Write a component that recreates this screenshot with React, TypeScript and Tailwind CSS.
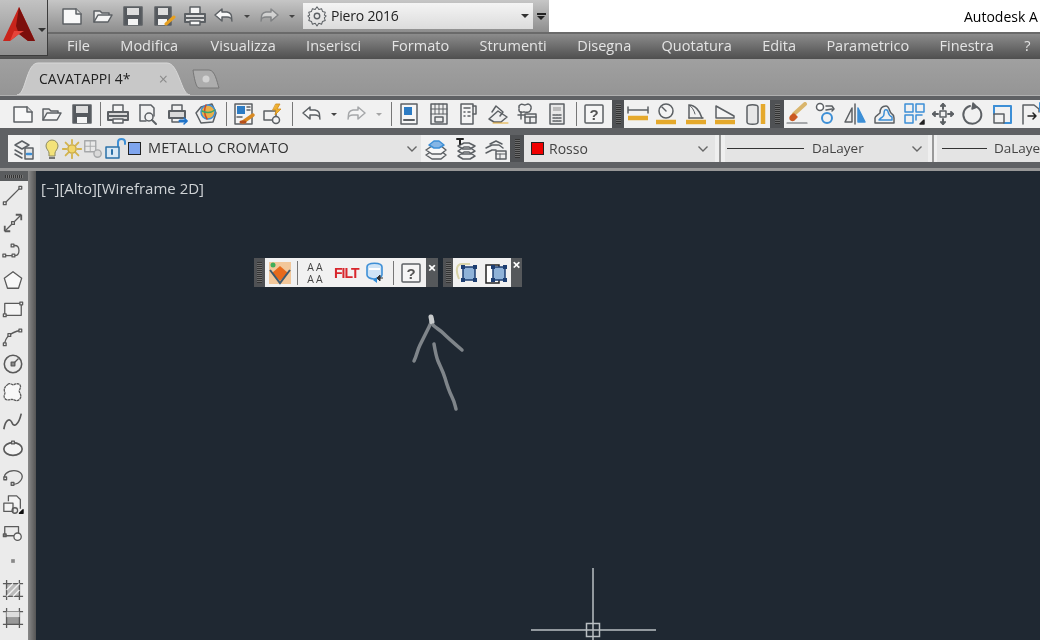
import React from "react";

const G = "#5c6064";
const B = "#3d8fd6";
const Y = "#e5a92c";

function Ic({ s = 24, children }: { s?: number; children: React.ReactNode }) {
  return (
    <svg width={s} height={s} viewBox="0 0 24 24" fill="none" stroke={G} strokeWidth="1.5" strokeLinejoin="round" strokeLinecap="round" className="shrink-0">
      {children}
    </svg>
  );
}

const New = () => <Ic><path d="M3 5h13l5 5v10H3z" fill="#f8f8f8" /><path d="M16 5v5h5" fill="#ddd" /></Ic>;
const Open = () => <Ic><path d="M3 18V7h6l2 2h7v3" fill="#e9e9e9" /><path d="M3 18l4-7h14l-4 7z" fill="#f5f5f5" /></Ic>;
const Save = () => <Ic><path d="M3 3h18v18H3z" fill="#55595e" /><path d="M6 4h12v7H6z" fill="#ddd" stroke="none" /><path d="M7 15h10v6H7z" fill="#f4f4f4" stroke="none" /></Ic>;
const SaveAs = () => <Ic><path d="M3 3h16v18H3z" fill="#55595e" /><path d="M6 4h10v7H6z" fill="#ddd" stroke="none" /><path d="M6 15h9v6H6z" fill="#f4f4f4" stroke="none" /><path d="M14 20l8-7" stroke="#e8a020" strokeWidth="3" /></Ic>;
const Print = () => <Ic><path d="M7 9V3h10v6" fill="#f4f4f4" /><path d="M2 10h20v8H2z" fill="#d9d9d9" strokeWidth="2" /><path d="M2 14h20" strokeWidth="2" /><path d="M7 17h10v4H7z" fill="#f8f8f8" /></Ic>;
const Preview = () => <Ic><path d="M5 3h11l3 3v8" /><path d="M5 3v16h6" /><circle cx="14" cy="15" r="4" /><path d="M17 18l4 4" strokeWidth="2" /></Ic>;
const Plot = () => <Ic><path d="M7 8V3h10v5" /><path d="M4 9h16v7H4z" fill="#d9d9d9" strokeWidth="2" /><path d="M7 16v4h7" /><path d="M15 19h6" stroke="#1f73c8" strokeWidth="3" /><path d="M19 16l3 3-3 3" stroke="#1f73c8" strokeWidth="1.5" /></Ic>;
const Pub3D = () => <Ic><path d="M2 11l5-6 11-3 4 9-3 9-12 1z" fill="#eee" /><circle cx="14" cy="10" r="7" fill="#e8b04a" stroke={B} /><path d="M12 3c-2 4-2 9 1 14" stroke="#cc4a2a" /><path d="M8 9c4 2 9 2 13-1" stroke="#3aa56a" /></Ic>;
const Match = () => <Ic><path d="M3 2h17v20H3z" fill="#f4f4f4" /><path d="M5 4h8v8H5z" fill="#2d7cc4" stroke="none" /><path d="M5 15h5" /><path d="M15 5h3M15 8h3" /><path d="M11 20l10-7" stroke="#d98a22" strokeWidth="3.5" /><path d="M9 20h4" stroke="#b7501c" strokeWidth="3" /></Ic>;
const Block = () => <Ic><path d="M3 9h12v9H3z" /><circle cx="15" cy="18" r="3.5" fill="#f4f4f4" /><path d="M15 2l4 0-3 5h4l-6 6 1-5h-3z" fill="#efb12f" stroke="#d08a1a" strokeWidth="0.8" /></Ic>;
const Undo = () => <Ic><path d="M10 5l-7 6 7 6v-4h5c3 0 5 2 5 4-1-3 1-8-5-9h-5z" fill="#f8f8f8" /></Ic>;
const Redo = () => <Ic><g opacity="0.5"><path d="M14 5l7 6-7 6v-4H9c-3 0-5 2-5 4 1-3-1-8 5-9h5z" fill="#f8f8f8" /></g></Ic>;
const Drop = ({ dim }: { dim?: boolean }) => <span className={`inline-block w-0 h-0 shrink-0 border-x-[3px] border-x-transparent border-t-[3px] ${dim ? "border-t-[#a5a5a5]" : "border-t-[#444]"}`} />;
const Props = () => <Ic><path d="M4 2h16v20H4z" fill="#f6f6f6" /><path d="M7 5h8v8H7z" fill="#2d7cc4" stroke="none" /><path d="M7 18h10" strokeWidth="2" /></Ic>;
const Design = () => <Ic><path d="M4 2h16v20H4z" fill="#eee" /><path d="M12 2v10M4 7h16M4 12h16M8 2v10M16 2v10" strokeWidth="1" /><path d="M8 15h8v5H8z" /></Ic>;
const Tools = () => <Ic><path d="M5 2h12v20H5z" fill="#f4f4f4" /><path d="M8 6h6M8 10h1M12 10h2M8 14h1M12 14h2" strokeWidth="1.5" /><path d="M17 4h3v8h-3" /></Ic>;
const SheetSet = () => <Ic><path d="M3 17l9-8 9 6-6 5H8z" fill="#eee" /><path d="M6 10l4-6 7 6-3 4" /><path d="M7 21h15" stroke={Y} strokeWidth="1" /></Ic>;
const Markup = () => <Ic><path d="M4 4c2-3 5-1 6-1s3-2 5 0 1 4 0 6-5 1-6 1-5 1-5-2 0-3 0-4z" strokeDasharray="2 1" /><path d="M3 13h7M6 10v7" /><path d="M10 12h11v9H10z" fill="#eee" /><path d="M10 15h11M15 15v6" /></Ic>;
const Calc = () => <Ic><path d="M5 2h14v20H5z" fill="#e8e8e8" /><path d="M8 5h8v4H8z" fill="#bbb" stroke="none" /><path d="M8 13h8M8 16h8M8 19h8" strokeWidth="1.5" strokeDasharray="2 1" /></Ic>;
const Help = () => <svg width="22" height="22" viewBox="0 0 22 22" className="shrink-0"><rect x="2" y="2" width="18" height="18" rx="1" fill="#f5f5f5" stroke={G} strokeWidth="1.5" /><text x="11" y="17" textAnchor="middle" fontSize="15" fontWeight="700" fill="#555" fontFamily="Liberation Sans">?</text></svg>;
const Ruler = ({ y = 20 }: { y?: number }) => <path d={`M2 ${y}h20`} stroke={Y} strokeWidth="4.5" strokeLinecap="butt" />;
const DimLin = () => <Ic><path d="M2 8h20M2 5v6M22 5v6" strokeWidth="1.5" /><Ruler y={16} /></Ic>;
const DimRad = () => <Ic><circle cx="12" cy="9" r="7" fill="#f4f4f4" /><path d="M12 9L8 5" /><Ruler /></Ic>;
const DimAng = () => <Ic><path d="M5 16V3c6 0 11 6 13 13" /><path d="M5 3c3 2 5 5 6 9" strokeWidth="1" /><path d="M5 16h14" /><Ruler /></Ic>;
const DimAli = () => <Ic><path d="M3 16V4l18 10v2z" fill="#f4f4f4" /><Ruler /></Ic>;
const DimBase = () => <Ic><path d="M4 5c0-3 11-3 11 0v15c0 3-11 3-11 0z" fill="#e7e7e7" /><path d="M20 2v20" stroke={Y} strokeWidth="4.5" strokeLinecap="butt" /></Ic>;
const Erase = () => <Ic><path d="M20 2L9 12" stroke="#d9b56c" strokeWidth="4" /><path d="M9 12l3 3-3 3c-2 1-4 0-4-2s2-3 4-4z" fill="#cb5a22" stroke="#cb5a22" /><path d="M2 21h20" strokeWidth="1.2" /></Ic>;
const CopyI = () => <Ic><circle cx="7" cy="5" r="3.5" fill="#fff" /><circle cx="14" cy="16" r="5" stroke={B} strokeWidth="2" /><path d="M13 4h6l2 3-2 2M13 8l6-1" strokeWidth="1.5" /></Ic>;
const Mirror = () => <Ic><path d="M12 2v20" /><path d="M9 6v14H2z" fill="#ececec" /><path d="M15 6v14h7z" fill={B} stroke={B} /></Ic>;
const Offset = () => <Ic><path d="M3 21v-5c0-2 3-3 5-5 0-4 2-7 6-7s3 7 6 8c2 1 2 3 2 4v5z" stroke={G} /><path d="M7 18c3-4 5-2 5-6s1-5 3-4 0 5 5 7v3z" stroke={B} /></Ic>;
const Array_ = () => <Ic><path d="M3 2h8v8H3zM14 2h8v8h-8zM3 13h8v8H3z" stroke={B} /><path d="M14 13h6M14 13v5" stroke={B} /><path d="M22 18v4h-4z" fill="#222" stroke="#222" /></Ic>;
const Move = () => <Ic><path d="M9 9h6v6H9z" /><path d="M12 2v5M12 17v5M2 12h5M17 12h5" strokeWidth="2" /><path d="M10 4l2-2 2 2M10 20l2 2 2-2M4 10l-2 2 2 2M20 10l2 2-2 2" strokeWidth="2" /></Ic>;
const Rotate = () => <Ic><path d="M9 4a9 9 0 1 0 7 1" strokeWidth="2" /><path d="M12 1l4 4-5 2z" fill={G} /></Ic>;
const Scale = () => <Ic><path d="M4 4h17v17h-7" stroke={B} strokeWidth="2" /><path d="M4 4v8" stroke={B} strokeWidth="2" /><path d="M4 12h10v9H4z" /></Ic>;
const Stretch = () => <Ic><path d="M3 22V3h11l5 4v3" /><path d="M8 14h8M13 11l3 3-3 3" stroke="#222" /><path d="M20 1v8M21 21V12" stroke={B} strokeWidth="2" /></Ic>;
const LayerMgr = () => <Ic><path d="M3 8l7-4 7 4-7 4z" fill="#eee" /><path d="M3 13l7 4M3 17l7 4" /><path d="M13 11h8v11h-8z" fill="#e5e5e5" /><path d="M15 17h4" stroke={B} strokeWidth="2.5" /></Ic>;
const Bulb = () => <svg width="18" height="24" viewBox="0 0 18 24" className="shrink-0"><path d="M3 9a6 6 0 1 1 12 0c0 3-3 5-3 7v3H6v-3c0-2-3-4-3-7z" fill="#f3e27a" stroke="#8d8a60" /><path d="M6 21h6" stroke="#777" strokeWidth="2" /></svg>;
const Sun = () => <Ic s={22}><circle cx="12" cy="12" r="4.5" fill="#f2d66a" stroke="#c8a842" /><path d="M12 2v4M12 18v4M2 12h4M18 12h4M5 5l3 3M16 16l3 3M5 19l3-3M16 8l3-3" stroke="#d3b34c" strokeWidth="2" /></Ic>;
const Freeze = () => <Ic s={22}><g opacity="0.45"><path d="M3 3h12v12H3z" fill="#eee" /><path d="M9 3v12M3 9h12" strokeWidth="1" /><circle cx="17" cy="17" r="4" fill="#ccc" /></g></Ic>;
const Lock = () => <Ic s={24}><path d="M14 9V5c0-4 7-4 7 0v2" stroke={B} strokeWidth="2" /><path d="M2 10h13v11H2z" fill="#d8e8f5" stroke="#2a70a8" strokeWidth="1.5" /><path d="M8 13v4" stroke="#2a70a8" strokeWidth="2" /></Ic>;
const LayerProps = () => <Ic><path d="M2 18l6-4h9l5 4-5 4H8z" fill="#f2f2f2" /><path d="M2 13l6-4h9l5 4-5 4H8z" fill="#f8f8f8" /><path d="M5 8l5-4h5l5 4-5 3h-5z" fill="#85b6e6" stroke={B} /></Ic>;
const LayerUp = () => <Ic><path d="M4 19l6-4h5l6 4-5 3H9zM4 14l6-4h5l6 4-5 3H9z" /><path d="M4 9l6-3h5l6 3-5 3H9z" /><path d="M3 2h6M6 2v5" stroke="#222" strokeWidth="2" /></Ic>;
const LayerIso = () => <Ic><path d="M2 16l6-3h4M2 11l6-3h7l4 3M6 7l6-3 6 3" /><path d="M12 14h10v8H12z" fill="#eee" /><path d="M12 17h10M16 17v5" strokeWidth="1" /></Ic>;

const Sep = ({ c = "" }: { c?: string }) => <span className={`w-px h-6 bg-[#777] shrink-0 ${c}`} />;
const Cell = ({ w = "w-[29.5px]", children }: { w?: string; children: React.ReactNode }) => <span className={`${w} h-full flex items-center justify-center shrink-0`}>{children}</span>;
const Grip = ({ w = "w-[10px]" }: { w?: string }) => (
  <span className={`${w} h-full bg-[#4f5154] shrink-0 flex items-center justify-center`}>
    <span className="w-[5px] h-[70%] bg-[repeating-linear-gradient(0deg,#333_0,#333_1px,#6c6c6c_1px,#6c6c6c_2px)]" />
  </span>
);
const Chevron = () => (
  <svg width="12" height="8" viewBox="0 0 12 8" className="shrink-0"><path d="M1.5 1.5L6 6l4.5-4.5" fill="none" stroke="#666" strokeWidth="1.4" /></svg>
);

const sideIcons = [
  <><path d="M3 21L20 4" /><rect x="1.5" y="19.5" width="3" height="3" fill="#eee" /><rect x="18.5" y="2.5" width="3" height="3" fill="#eee" /></>,
  <><path d="M3 21L21 3" /><path d="M21 3v6M21 3h-6M3 21v-6M3 21h6" strokeWidth="2" /><rect x="10.5" y="10.5" width="3" height="3" fill="#eee" /></>,
  <><path d="M3 17h11c6 0 6-11 0-11h-3" /><rect x="1" y="15.5" width="3" height="3" fill="#eee" /><rect x="11" y="15.5" width="3" height="3" fill="#eee" /><rect x="10" y="4.5" width="3" height="3" fill="#eee" /></>,
  <path d="M12 3l9.5 7-3.5 11H6L2.5 10z" fill="#f8f8f8" />,
  <><path d="M3 7h18v13H3z" fill="#f4f4f4" /><rect x="1.5" y="18.5" width="3" height="3" fill="#eee" /><rect x="19.5" y="5.5" width="3" height="3" fill="#eee" /></>,
  <><path d="M3 21c0-7 6-13 17-15" /><rect x="1.5" y="19.5" width="3" height="3" fill="#eee" /><rect x="6.5" y="9.5" width="3" height="3" fill="#eee" /><rect x="18.5" y="4.5" width="3" height="3" fill="#eee" /></>,
  <><circle cx="12" cy="12" r="9.5" strokeWidth="1.7" /><path d="M12 12l6-6" /><rect x="10" y="10" width="4" height="4" fill="#888" /></>,
  <path d="M6 4c3-3 5 1 7 0s6-2 7 1-2 5-1 7 3 5 0 8-6 0-8 0-6 2-8-1 1-5 0-7-1-5 3-8z" fill="#f8f8f8" strokeDasharray="3 0.5" />,
  <path d="M2 21c2-12 7-12 9-7s7 3 10-10" strokeWidth="1.8" />,
  <><ellipse cx="12" cy="12" rx="10" ry="7" fill="#f4f4f4" strokeWidth="1.8" /><rect x="10.5" y="3.5" width="3" height="3" fill="#eee" /></>,
  <><path d="M4 15c-4-5 2-10 9-10s11 5 8 10-8 5-9 5" /><rect x="2" y="12" width="3" height="3" fill="#eee" /><rect x="10" y="18" width="3" height="3" fill="#eee" /></>,
  <><path d="M7 8V2h9l4 4v10" fill="#f4f4f4" /><path d="M2 10h10v9H2z" fill="#f4f4f4" /><circle cx="14" cy="18" r="3" /><path d="M19 21h4v-4z" fill="#111" stroke="#111" /></>,
  <><path d="M3 5h15v10H3z" /><circle cx="17" cy="16" r="4" fill="#f2f2f2" /><rect x="1.5" y="13" width="3" height="3" fill="#777" /></>,
  <rect x="10" y="10" width="4" height="4" fill="#888" stroke="none" />,
  <><path d="M5 1v22M19 1v22M1 5h22M1 19h22" /><path d="M5 5h14v14H5z" fill="#bbb" /><path d="M5 12l7-7M5 19L19 5M12 19l7-7" stroke="#f1f1f1" strokeWidth="1.5" /></>,
  <><path d="M5 1v22M19 1v22M1 5h22M1 19h22" /><rect x="5" y="5" width="14" height="14" fill="#999" /><rect x="5" y="5" width="14" height="6" fill="#ddd" stroke="none" /></>,
];

const menus = ["File", "Modifica", "Visualizza", "Inserisci", "Formato", "Strumenti", "Disegna", "Quotatura", "Edita", "Parametrico", "Finestra", "?"];

export default function App() {
  return (
    <div className="w-[1040px] h-[640px] overflow-hidden relative flex flex-col bg-[#5f6164] text-[14px] blur-[0.5px] font-['Open_Sans','Noto_Sans',sans-serif]">
      {/* Application button */}
      <div className="absolute left-0 top-0 w-[48px] h-[56px] z-10 bg-gradient-to-b from-[#c2c2c2] to-[#8f8f8f] border-r border-b border-[#3c3c3c] flex items-start pt-[6px] pl-[2px]">
        <svg width="34" height="36" viewBox="0 0 34 36">
          <path d="M17 1L1 35h7l9-7 9 7h7z" fill="#c9241b" />
          <path d="M17 1l-3 19 3 8 9 7h7z" fill="#7c0f0c" />
          <path d="M8 35l9-7 5-3H12z" fill="#e6443a" />
        </svg>
        <span className="ml-[2px] mt-[22px] w-0 h-0 border-x-[4px] border-x-transparent border-t-[4px] border-t-[#333]" />
      </div>

      {/* Quick access row */}
      <div className="h-[32px] flex bg-white shrink-0">
        <div className="w-[549px] pl-[57px] h-full flex items-center bg-gradient-to-b from-[#c6c6c6] to-[#8e8e8e]">
          <Cell w="w-[30px]"><New /></Cell>
          <Cell w="w-[31px]"><Open /></Cell>
          <Cell w="w-[30px]"><Save /></Cell>
          <Cell w="w-[31px]"><SaveAs /></Cell>
          <Cell w="w-[31px]"><Print /></Cell>
          <Cell w="w-[28px]"><Undo /></Cell>
          <Cell w="w-[18px]"><Drop /></Cell>
          <Cell w="w-[26px]"><Redo /></Cell>
          <Cell w="w-[20px]"><Drop /></Cell>
          <div className="w-[230px] h-[26px] bg-gradient-to-b from-[#f4f4f4] to-[#dcdcdc] flex items-center pl-[3px] pr-[4px] ml-[1px] shrink-0">
            <Ic s={22}><circle cx="12" cy="12" r="3" /><path d="M12 2l2 3 3-1 1 3 3 1-1 3 2 1-2 2 1 3-3 1-1 3-3-1-2 3-2-3-3 1-1-3-3-1 1-3-2-2 2-1-1-3 3-1 1-3 3 1z" strokeWidth="1.1" /></Ic>
            <span className="ml-[3px] text-[#222] leading-none -tracking-[0.2px]">Piero 2016</span>
            <span className="ml-auto"><span className="block w-0 h-0 border-x-[4px] border-x-transparent border-t-[4px] border-t-[#333]" /></span>
          </div>
          <div className="w-[12px] ml-[2px] flex flex-col items-center gap-[1px]">
            <span className="w-[9px] h-[2px] bg-[#222]" />
            <span className="w-0 h-0 border-x-[4px] border-x-transparent border-t-[4px] border-t-[#222]" />
          </div>
        </div>
        <div className="flex-1 pl-[415px] flex items-center text-black overflow-hidden whitespace-nowrap">Autodesk A</div>
      </div>

      {/* Menu row */}
      <div className="h-[27px] shrink-0 flex items-center pl-[67px] gap-[30.4px] bg-gradient-to-b from-[#8c8c8c] to-[#4f4f4f] border-t-2 border-[#6a6a6a] text-[#e4e4e4] text-[14.5px]">
        {menus.map((m) => <span key={m} className={`leading-none whitespace-nowrap ${m === "Modifica" ? "pr-[2px]" : ""}`}>{m}</span>)}
      </div>

      {/* Tabs */}
      <div className="h-[37px] shrink-0 bg-gradient-to-b from-[#a0a0a0] to-[#959595] flex items-end pl-[17px] border-b border-[#b0b0b0]">
        <div className="relative w-[173px] h-[33px] flex items-center pl-[22px] pr-[22px] text-[#222]">
          <svg className="absolute left-0 top-0" width="173" height="33" viewBox="0 0 173 33">
            <path d="M0 33C9 33 9 1 21 1H150C162 1 164 33 173 33Z" fill="#c8c8c8" stroke="#d8d8d8" />
          </svg>
          <span className="relative leading-none whitespace-nowrap">CAVATAPPI 4*</span>
          <span className="relative ml-auto text-[#8b8b8b] text-[16px] leading-none">×</span>
        </div>
        <svg width="32" height="26" viewBox="0 0 32 26" className="mb-[2px]">
          <path d="M3 3h16c6 0 8 12 10 18H9C6 21 4 10 3 3z" fill="#adadad" stroke="#777" />
          <circle cx="16" cy="12" r="3.5" fill="#d2d2d2" />
        </svg>
      </div>

      {/* Toolbar 1 */}
      <div className="h-[37px] shrink-0 pt-[4px] pb-[5px] flex items-stretch bg-[#5f6164]">
        <div className="w-[612px] bg-[#f1f1f1] flex items-center pl-[8px] shrink-0">
          <Cell><New /></Cell><Cell><Open /></Cell><Cell><Save /></Cell>
          <Sep c="ml-[3.25px] mr-[2.25px]" />
          <Cell><Print /></Cell><Cell><Preview /></Cell><Cell><Plot /></Cell><Cell><Pub3D /></Cell>
          <Sep c="ml-[4.75px] mr-[2.25px]" />
          <Cell><Match /></Cell><Cell><Block /></Cell>
          <Sep c="ml-[3.75px] mr-[4.25px]" />
          <Cell><Undo /></Cell><Cell w="w-[14px]"><Drop /></Cell><Cell w="w-[29.5px] ml-[1px]"><Redo /></Cell><Cell w="w-[14px] ml-[1px]"><Drop dim /></Cell>
          <Sep c="ml-[5px] mr-[2.25px]" />
          <Cell><Props /></Cell><Cell><Design /></Cell><Cell><Tools /></Cell><Cell><SheetSet /></Cell><Cell><Markup /></Cell><Cell><Calc /></Cell>
          <Sep c="ml-[4.75px] mr-[2px]" />
          <Cell w="w-[30px]"><Help /></Cell>
        </div>
        <Grip w="w-[12px]" />
        <div className="w-[146px] bg-[#f1f1f1] flex items-center shrink-0">
          <Cell w="w-[27.5px]"><DimLin /></Cell><Cell><DimRad /></Cell><Cell><DimAng /></Cell><Cell><DimAli /></Cell><Cell><DimBase /></Cell>
        </div>
        <Grip w="w-[14px]" />
        <div className="flex-1 bg-[#f1f1f1] flex items-center overflow-hidden">
          <Cell w="w-[26.5px]"><Erase /></Cell><Cell><CopyI /></Cell><Cell><Mirror /></Cell><Cell><Offset /></Cell><Cell><Array_ /></Cell><Cell><Move /></Cell><Cell><Rotate /></Cell><Cell><Scale /></Cell><Cell><Stretch /></Cell>
        </div>
      </div>

      {/* Toolbar 2 */}
      <div className="h-[38px] shrink-0 pt-[2px] pb-[6px] flex items-stretch bg-[#5f6164] border-b-[3px] border-[#979797]">
        <div className="w-[8px] shrink-0 bg-[#5f6164]" />
        <div className="w-[502px] bg-[#f1f1f1] flex items-center shrink-0">
          <Cell w="w-[32px]"><LayerMgr /></Cell>
          <div className="w-[381px] h-full bg-[#e4e4e4] flex items-center pl-[3px] pr-[3px] shrink-0">
            <Bulb />
            <Sun />
            <span className="ml-[-1px]"><Freeze /></span>
            <Lock />
            <span className="w-[13px] h-[13px] bg-[#7fa5ee] border border-[#222] shrink-0" />
            <span className="ml-[7px] text-[#333] text-[14.5px] leading-none whitespace-nowrap tracking-[0.1px]">METALLO CROMATO</span>
            <span className="ml-auto"><Chevron /></span>
          </div>
          <Cell w="w-[30px]"><LayerProps /></Cell><Cell w="w-[30px]"><LayerUp /></Cell><Cell w="w-[29px]"><LayerIso /></Cell>
        </div>
        <Grip w="w-[14px]" />
        <div className="w-[191px] bg-[#e4e4e4] flex items-center pl-[7px] pr-[6px] shrink-0">
          <span className="w-[13px] h-[13px] bg-[#f00000] border border-[#222]" />
          <span className="ml-[5px] text-[#444] leading-none">Rosso</span>
          <span className="ml-auto"><Chevron /></span>
        </div>
        <div className="w-[10px] shrink-0 flex justify-center bg-[#efefef]"><span className="w-[2px] h-full bg-[#999]" /></div>
        <div className="w-[203px] bg-[#e4e4e4] flex items-center pl-[2px] pr-[5px] shrink-0">
          <span className="w-[77px] h-px bg-[#333]" />
          <span className="ml-[8px] text-[#444] text-[13.5px] leading-none">DaLayer</span>
          <span className="ml-auto"><Chevron /></span>
        </div>
        <div className="w-[9px] shrink-0 flex justify-center bg-[#efefef]"><span className="w-[2px] h-full bg-[#999]" /></div>
        <div className="flex-1 bg-[#e4e4e4] flex items-center pl-[5px] overflow-hidden whitespace-nowrap">
          <span className="w-[45px] h-px bg-[#333] shrink-0" />
          <span className="ml-[7px] text-[#444] text-[13.5px] leading-none">DaLayer</span>
        </div>
      </div>

      {/* Body */}
      <div className="flex-1 min-h-0 flex">
        <div className="w-[28px] shrink-0 bg-[#ebebeb] flex flex-col items-center overflow-hidden">
          <div className="w-full h-[10px] shrink-0 bg-[#5a5c5e] flex items-center justify-center">
            <span className="w-[18px] h-[3px] bg-[repeating-linear-gradient(90deg,#333_0,#333_1px,#777_1px,#777_2px)]" />
          </div>
          <div className="flex flex-col items-center gap-[6.2px] pt-[3px] pr-[3px]">
            {sideIcons.map((c, i) => (
              <svg key={i} width="22" height="22" viewBox="0 0 24 24" fill="none" stroke="#5a5a5a" strokeWidth="1.4" strokeLinejoin="round" className="shrink-0">{c}</svg>
            ))}
          </div>
        </div>
        <div className="w-[8px] shrink-0 bg-gradient-to-r from-[#8a8a8a] to-[#555]" />
        <div className="flex-1 relative bg-[#1f2832] overflow-hidden">
          <span className="absolute left-[5px] top-[10px] text-[15px] leading-none text-[#cfd3d6] whitespace-nowrap">[−][Alto][Wireframe 2D]</span>

          {/* Floating toolbar 1 */}
          <div className="absolute left-[218px] top-[87px] h-[29px] flex items-stretch">
            <Grip w="w-[11px]" />
            <div className="w-[161px] bg-[#f1f1f1] flex items-center pl-[1px]">
              <Cell w="w-[28px]">
                <svg width="24" height="24" viewBox="0 0 24 24" className="shrink-0">
                  <rect x="1" y="1" width="22" height="22" fill="#f2c79a" />
                  <path d="M12 5l8 7-8 8-8-8z" fill="#e76a1c" />
                  <path d="M2 9l10 13L22 9" fill="none" stroke="#3d5a70" strokeWidth="2" />
                  <circle cx="5" cy="4" r="2.5" fill="#3fae5a" />
                </svg>
              </Cell>
              <Sep c="ml-[3px]" />
              <Cell w="w-[36px]">
                <span className="flex flex-col text-[10.5px] leading-[12px] text-[#444] items-center">
                  <span className="tracking-[2px]">AA</span>
                  <span className="tracking-[2px]">AA</span>
                </span>
              </Cell>
              <span className="text-[#d8262c] font-bold text-[14px] leading-none w-[24px] -tracking-[1px] font-['Liberation_Sans',sans-serif] shrink-0">FILT</span>
              <Cell w="w-[30px] ml-[2px]">
                <svg width="24" height="24" viewBox="0 0 24 24" fill="none" className="shrink-0">
                  <path d="M4 6c0-5 15-5 15 0v8c0 2-4 4-8 4s-7-2-7-4z" fill="#cfe4f6" stroke={B} strokeWidth="1.6" />
                  <path d="M6 8h11" stroke="#fff" strokeWidth="2" />
                  <path d="M10 19l4 3v-6z" fill="#2e8bd8" />
                  <path d="M16 17h4M17 14l-3 3 3 3z" stroke="#333" fill="#333" />
                </svg>
              </Cell>
              <Cell w="w-[6px]"><Sep /></Cell>
              <Cell w="w-[30px]"><Help /></Cell>
            </div>
            <div className="w-[12px] bg-[#55585b] flex justify-center">
              <span className="text-white font-bold text-[15px] leading-[18px]">×</span>
            </div>
          </div>

          {/* Floating toolbar 2 */}
          <div className="absolute left-[407px] top-[87px] h-[29px] flex items-stretch">
            <Grip w="w-[10px]" />
            <div className="w-[58px] bg-[#f1f1f1] flex items-center justify-center gap-[4px]">
              <svg width="26" height="24" viewBox="0 0 26 24" fill="none" className="shrink-0">
                <path d="M5 18C1 8 3 3 8 3h8" stroke="#d8d3a8" strokeWidth="2" />
                <path d="M9 6h12v13H9z" fill="#8fb2d8" stroke="#1d3e72" strokeWidth="1.5" />
                <path d="M7 4h4v4H7zM19 4h4v4h-4zM7 17h4v4H7zM19 17h4v4h-4z" fill="#1d3e72" />
              </svg>
              <svg width="26" height="24" viewBox="0 0 26 24" fill="none" className="shrink-0">
                <path d="M2 4h13v18H2z" fill="#fff" stroke="#222" strokeWidth="1.5" />
                <path d="M9 6h12v13H9z" fill="#8fb2d8" stroke="#1d3e72" strokeWidth="1.5" />
                <path d="M7 4h4v4H7zM19 4h4v4h-4zM7 17h4v4H7zM19 17h4v4h-4z" fill="#1d3e72" />
              </svg>
            </div>
            <div className="w-[11px] bg-[#55585b] flex justify-center">
              <span className="text-white font-bold text-[15px] leading-[12px]">×</span>
            </div>
          </div>

          {/* Hand-drawn arrow */}
          <svg className="absolute left-[370px] top-[140px]" width="70" height="105" viewBox="0 0 70 105" fill="none" stroke="#7f858a" strokeWidth="3.5" strokeLinecap="round" strokeLinejoin="round">
            <path d="M8 50c3-6 3-10 6-16s6-12 9-18 2-6 3-8" />
            <path d="M25 6l1 5" stroke="#c7cacb" strokeWidth="5" />
            <path d="M27 14c3 3 7 5 10 8s12 11 19 17" />
            <path d="M28 33c1 6 2 12 4 17s5 10 7 17 4 13 7 19 3 9 4 12" />
          </svg>

          {/* Crosshair */}
          <svg className="absolute left-[494px] top-[395px]" width="128" height="74" viewBox="0 0 128 74" fill="none" stroke="#b9bec2" strokeWidth="1.5">
            <path d="M63 2v72M1 64h125" />
            <rect x="56.5" y="57.5" width="13" height="13" />
          </svg>
        </div>
      </div>
    </div>
  );
}
